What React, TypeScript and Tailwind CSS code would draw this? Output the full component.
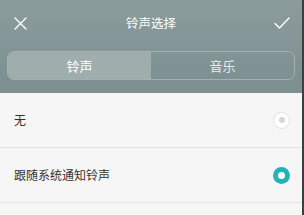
import React, { useState } from 'react';

const font = { fontFamily: '"Noto Sans CJK SC", "Noto Sans", sans-serif' };

interface Option {
  id: string;
  label: string;
}

const options: Option[] = [
  { id: 'none', label: '无' },
  { id: 'system', label: '跟随系统通知铃声' },
];

function Radio({ checked }: { checked: boolean }) {
  if (checked) {
    return (
      <span className="flex h-[17px] w-[17px] items-center justify-center rounded-full bg-[#22b3b7]">
        <span className="h-[7px] w-[7px] rounded-full bg-white" />
      </span>
    );
  }
  return (
    <span className="flex h-[17px] w-[17px] items-center justify-center rounded-full border border-[#e2e2e2] bg-white">
      <span className="h-[6px] w-[6px] rounded-full bg-[#d6d6d6]" />
    </span>
  );
}

export default function App() {
  const [tab, setTab] = useState<'ring' | 'music'>('ring');
  const [selected, setSelected] = useState('system');

  return (
    <div className="flex h-[215px] w-[304px] overflow-hidden border-r-2 border-[#3a4040] bg-[#f6f6f6]" style={font}>
      <div className="flex w-full flex-col">
        {/* header */}
        <div className="flex h-[93px] flex-col bg-gradient-to-b from-[#8b9c9d] to-[#7c8e8f] px-[7px]">
          <div className="flex h-[46px] items-center justify-between">
            <button className="flex w-[26px] items-center justify-center text-white">
              <svg width="13" height="13" viewBox="0 0 13 13" fill="none" stroke="currentColor" strokeWidth="1.4" strokeLinecap="round">
                <path d="M1 1l11 11M12 1L1 12" />
              </svg>
            </button>
            <span className="text-[12.5px] text-white">铃声选择</span>
            <button className="flex w-[26px] items-center justify-center text-white">
              <svg width="16" height="12" viewBox="0 0 16 12" fill="none" stroke="currentColor" strokeWidth="1.4" strokeLinecap="round" strokeLinejoin="round">
                <path d="M1 6.5l4.5 4.5L15 1" />
              </svg>
            </button>
          </div>
          <div className="mt-[5px] flex h-[29px] overflow-hidden rounded-[7px] border border-[#a4b1b1]">
            <button
              onClick={() => setTab('ring')}
              className={`flex flex-1 items-center justify-center text-[13px] text-white ${tab === 'ring' ? 'bg-[#a0adad]' : ''}`}
            >
              铃声
            </button>
            <button
              onClick={() => setTab('music')}
              className={`flex flex-1 items-center justify-center text-[13px] text-[#e8eded] ${tab === 'music' ? 'bg-[#a0adad]' : ''}`}
            >
              音乐
            </button>
          </div>
        </div>

        {/* list */}
        <div className="flex flex-col">
          {options.map((o) => (
            <div
              key={o.id}
              onClick={() => setSelected(o.id)}
              className="flex h-[55px] items-center justify-between border-b border-[#e4e4e4] pl-[14px] pr-[12px]"
            >
              <span className="text-[12px] text-[#333]">{o.label}</span>
              <Radio checked={selected === o.id} />
            </div>
          ))}
        </div>
      </div>
    </div>
  );
}
